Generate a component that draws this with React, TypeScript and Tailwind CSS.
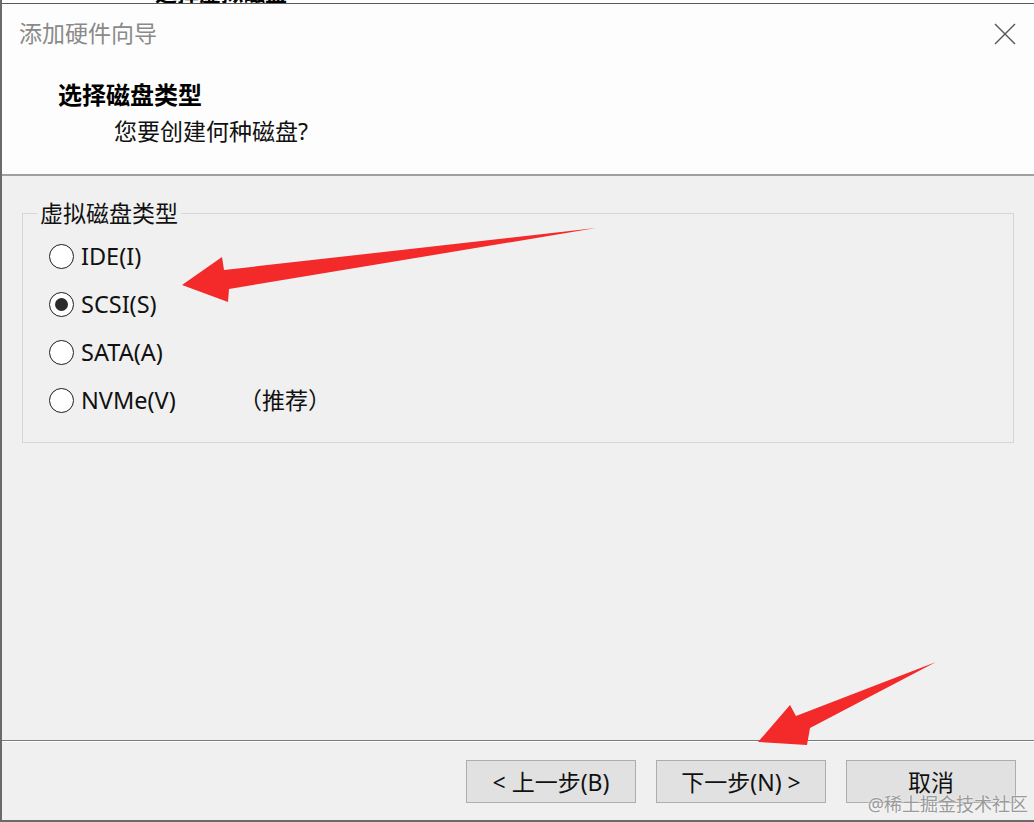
import React from "react";

const font = { fontFamily: '"Noto Sans", "Noto Sans CJK SC", sans-serif' };

function Radio({ checked }: { checked?: boolean }) {
  return (
    <span className="flex h-[25px] w-[25px] items-center justify-center rounded-full border-[1.5px] border-[#1f1f1f] bg-white">
      {checked && <span className="h-[13px] w-[13px] rounded-full bg-[#2b2b2b]" />}
    </span>
  );
}

function Row({ label, checked, extra }: { label: string; checked?: boolean; extra?: string }) {
  return (
    <div className="flex h-[48px] items-center pl-[26px]">
      <Radio checked={checked} />
      <span className="ml-[7px] w-[158px] text-[23.5px] leading-[28px] text-[#111]">{label}</span>
      {extra && <span className="text-[23px] leading-[28px] text-[#111]">{extra}</span>}
    </div>
  );
}

function Btn({ children }: { children: React.ReactNode }) {
  return (
    <button className="flex h-[43px] w-[170px] items-center justify-center border border-[#adadad] bg-[#e1e1e1] text-[23px] leading-[28px] text-[#111]">
      {children}
    </button>
  );
}

export default function App() {
  return (
    <div
      className="relative flex h-[822px] w-[1034px] flex-col overflow-hidden border-b-2 border-l-2 border-[#6a6a6a] bg-[#f0f0f0]"
      style={font}
    >
      {/* background window fragment */}
      <div className="h-[4px] shrink-0 overflow-hidden border-b border-[#5a5a5a] bg-white">
        <div className="-mt-[19px] pl-[153px] text-[22px] font-bold leading-[22px] text-black">选择虚拟磁盘</div>
      </div>

      {/* header */}
      <div className="h-[172px] shrink-0 border-b-2 border-[#a0a0a0] bg-[#fdfdfd]">
        <div className="mt-[17px] flex h-[24px] items-center justify-between pl-[17px] pr-[18px]">
          <span className="text-[23px] leading-[24px] text-[#8a8a8a]">添加硬件向导</span>
          <svg width="22" height="22" viewBox="0 0 22 22" className="mt-[1px]">
            <path d="M1 1 L21 21 M21 1 L1 21" stroke="#555" strokeWidth="1.4" fill="none" />
          </svg>
        </div>
        <div className="mt-[36px] pl-[56px] text-[24px] font-bold leading-[28px] text-black">选择磁盘类型</div>
        <div className="mt-[8px] pl-[112px] text-[23px] leading-[28px] text-[#111]">您要创建何种磁盘?</div>
      </div>

      {/* body */}
      <div className="flex-1 pt-[25px]">
        <fieldset className="mx-[20px] h-[242px] border border-[#d6d6d6] p-0 pt-[7px]">
          <legend className="ml-[14px] px-[3px] text-[23px] leading-[24px] text-[#111]">虚拟磁盘类型</legend>
          <Row label="IDE(I)" />
          <Row label="SCSI(S)" checked />
          <Row label="SATA(A)" />
          <Row label="NVMe(V)" extra="（推荐）" />
        </fieldset>
      </div>

      {/* footer */}
      <div className="h-[80px] shrink-0 border-t border-[#7a7a7a]">
        <div className="h-px bg-white" />
        <div className="mt-[18px] flex justify-end gap-[20px] pr-[18px]">
          <Btn>&lt; 上一步(B)</Btn>
          <Btn>下一步(N) &gt;</Btn>
          <Btn>取消</Btn>
        </div>
      </div>

      {/* watermark */}
      <div className="absolute bottom-[5px] right-[6px] text-[18px] leading-[22px] text-[#9a9a9a] [text-shadow:0_0_2px_#fff]">
        @稀土掘金技术社区
      </div>

      {/* annotation arrows */}
      <svg className="pointer-events-none absolute left-[-2px] top-0" width="1034" height="822" viewBox="0 0 1034 822">
        <polygon points="182,285 222,257 224,270 596,228 229,289 228,302" fill="#f3292a" />
        <polygon points="758,742 790,705 796,716 936,662 810,728 807,745" fill="#f3292a" />
      </svg>
    </div>
  );
}
